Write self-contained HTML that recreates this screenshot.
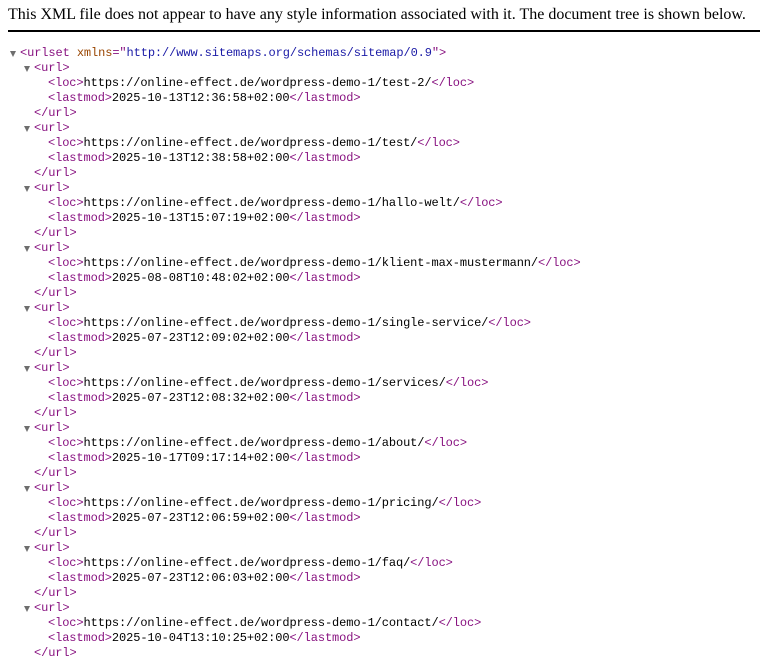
<!DOCTYPE html>
<html><head><meta charset="utf-8"><style>
body{margin:0;background:#fff;width:760px;height:660px;overflow:hidden;position:relative}
.hdr{position:absolute;left:8px;top:6px;font:16px "Liberation Serif",serif;color:#000;white-space:nowrap}
.rule{position:absolute;left:8px;top:30px;width:752px;height:2px;background:#000}
.tree{position:absolute;left:0;top:46px;font:12px "Liberation Mono",monospace;letter-spacing:-0.1px;line-height:15px;color:#000}
.l{height:15px;position:relative;white-space:pre}
.t{color:#881280}.an{color:#994500}.av{color:#1a1aa6}
.ar{position:absolute;top:5px;width:0;height:0;border-left:3.5px solid transparent;border-right:3.5px solid transparent;border-top:6px solid #6e6e6e}
</style></head><body>
<div class="hdr">This XML file does not appear to have any style information associated with it. The document tree is shown below.</div>
<div class="rule"></div>
<div class="tree" id="tr"></div>
<script>
var d=[["test-2","2025-10-13T12:36:58"],["test","2025-10-13T12:38:58"],["hallo-welt","2025-10-13T15:07:19"],["klient-max-mustermann","2025-08-08T10:48:02"],["single-service","2025-07-23T12:09:02"],["services","2025-07-23T12:08:32"],["about","2025-10-17T09:17:14"],["pricing","2025-07-23T12:06:59"],["faq","2025-07-23T12:06:03"],["contact","2025-10-04T13:10:25"]];
var h='<div class="l"><span class="ar" style="left:10px"></span><span style="margin-left:20px" class="t">&lt;urlset <span class="an">xmlns</span>="<span class="av">http://www.sitemaps.org/schemas/sitemap/0.9</span>"&gt;</span></div>';
d.forEach(function(x){
h+='<div class="l"><span class="ar" style="left:24px"></span><span style="margin-left:34px" class="t">&lt;url&gt;</span></div>';
h+='<div class="l"><span style="margin-left:48px" class="t">&lt;loc&gt;</span>https://online-effect.de/wordpress-demo-1/'+x[0]+'/<span class="t">&lt;/loc&gt;</span></div>';
h+='<div class="l"><span style="margin-left:48px" class="t">&lt;lastmod&gt;</span>'+x[1]+'+02:00<span class="t">&lt;/lastmod&gt;</span></div>';
h+='<div class="l"><span style="margin-left:34px" class="t">&lt;/url&gt;</span></div>';
});
document.getElementById("tr").innerHTML=h;
</script>
</body></html>
